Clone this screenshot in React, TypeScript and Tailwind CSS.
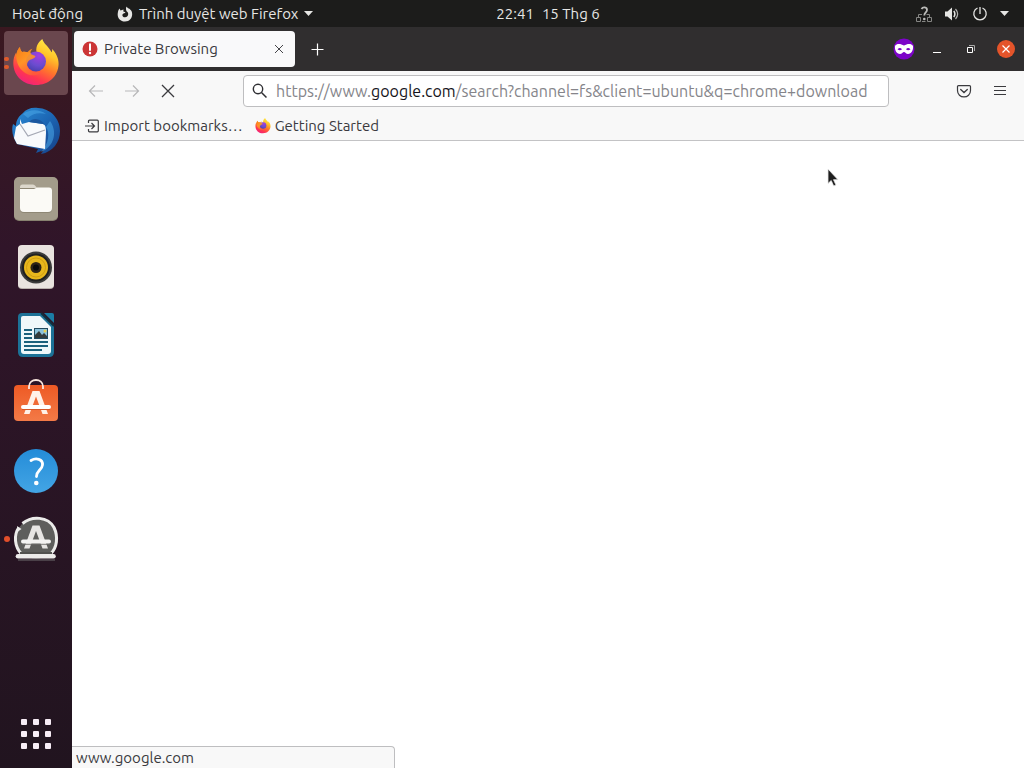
import { useId, useState } from 'react';
import type { ReactNode } from 'react';

function FirefoxIcon({ size }: { size: number }) {
  const id = useId();
  return (
    <svg width={size} height={size} viewBox="0 0 48 48" overflow="visible" aria-hidden="true">
      <defs>
        <linearGradient id={`${id}a`} x1="0.8" y1="0" x2="0.3" y2="1">
          <stop offset="0" stopColor="#fff14a" />
          <stop offset="0.3" stopColor="#ffc42a" />
          <stop offset="0.55" stopColor="#ff7a2a" />
          <stop offset="0.8" stopColor="#ff3650" />
          <stop offset="1" stopColor="#f0217e" />
        </linearGradient>
        <radialGradient id={`${id}b`} cx="0.65" cy="0.2" r="0.85">
          <stop offset="0" stopColor="#a43ee0" />
          <stop offset="0.6" stopColor="#6b4ccf" />
          <stop offset="1" stopColor="#4a3fae" />
        </radialGradient>
        <linearGradient id={`${id}c`} x1="0" y1="0" x2="0.6" y2="1">
          <stop offset="0" stopColor="#f57a16" />
          <stop offset="0.5" stopColor="#ff9a24" />
          <stop offset="1" stopColor="#ff5a3a" />
        </linearGradient>
      </defs>
      <path
        d="M30.300 0C31.500 4.500 36 7 38.500 11.500C39 12.500 39.400 13.500 39.800 13C40.300 12 40.200 11 40 10C43.500 13 46.800 19 46.600 25C46.200 37.500 36.500 46 24 46C11.500 46 1.600 37 1.300 24.500C1.200 20.500 2.400 16.500 4 13.800L4.200 16C5 12.500 6 9.800 8 8C8 10.500 9 12 10.200 13C12 12.500 14 12.700 15.500 13.200L25 15C23 9 25.500 3.500 30.300 0Z"
        fill={`url(#${id}a)`}
      />
      <circle cx="24" cy="22.500" r="10" fill={`url(#${id}b)`} />
      <path
        d="M8 8C8 10.500 9 12 10.200 13C12 12.500 14 12.700 15.500 13.200C17 11.500 18.500 10.300 20.500 9.800C19 11.500 18.200 13 18.400 14.500C20 16 22 16.300 23.500 17.200C23 19.800 19 19.900 17 21.500C15 23.500 14.600 26 15.600 28C18 33.300 24 34.500 29 31.500C28 36 21.500 37.500 16 35.500C8 32 4 24 4.200 16C5 12.500 6 9.800 8 8Z"
        fill={`url(#${id}c)`}
        opacity="0.9"
      />
    </svg>
  );
}

function ThunderbirdIcon() {
  return (
    <svg width="48" height="48" viewBox="0 0 48 48" aria-hidden="true">
      <defs>
        <linearGradient id="bird" x1="0" y1="0" x2="1" y2="1">
          <stop offset="0" stopColor="#2d8fd8" />
          <stop offset="0.5" stopColor="#1c66b4" />
          <stop offset="1" stopColor="#153e86" />
        </linearGradient>
      </defs>
      <path d="M11 6C14 2 20 0 26 1C38 1.500 48 11 48 24C48 35 41 45 29 47L32 43L24 46L26 42L5 37C1 31 -1 24 1 17L4 19C4 13 7 9 11 6Z" fill="url(#bird)" />
      <path d="M11 7C18 2 27 2 34 7C26 5 20 7 16 11ZM34 20C38 25 37 37 29 45C42 40 46 25 38 14Z" fill="#4aa7e8" opacity="0.55" />
      <path d="M8 12L10 17L17 15L31 17C34 18 34 22 34 26L33 42L5 37L2 31L4 20L8 17Z" fill="#f8fafc" />
      <path d="M8 17L16 29L33 23" fill="none" stroke="#a4a8b4" strokeWidth="1.200" />
      <path d="M17 15C21 10 29 11 33 18L31 17Z" fill="#1b579f" />
    </svg>
  );
}

function FilesIcon() {
  return (
    <svg width="48" height="48" viewBox="0 0 48 48" aria-hidden="true">
      <rect x="2" y="3" width="44" height="43" rx="5" fill="#87816f" />
      <rect x="2" y="2" width="44" height="43" rx="5" fill="#a39c8b" />
      <path d="M8 13Q8 10 10 10H22L25 13H38Q40 13 40 16V34Q40 38 36 38H12Q8 38 8 34Z" fill="#807968" opacity="0.6" />
      <path d="M8 12Q8 9.500 10.500 9.500H21Q22.500 9.500 23.500 11L25 13H8Z" fill="#dcd7cc" />
      <path d="M8 14H22L25 12.500H37Q40 12.500 40 15.500V33Q40 37 36 37H12Q8 37 8 33Z" fill="#fbfaf6" />
    </svg>
  );
}

function RhythmboxIcon() {
  return (
    <svg width="48" height="48" viewBox="0 0 48 48" aria-hidden="true">
      <rect x="6" y="3" width="36" height="43" rx="4" fill="#b9b0ac" />
      <rect x="6" y="2" width="36" height="43" rx="4" fill="#e9e3df" />
      <circle cx="24" cy="24.500" r="16" fill="#3b3b3b" />
      <circle cx="24" cy="24.500" r="14" fill="#202020" />
      <circle cx="24" cy="24.500" r="12" fill="#e8b71c" />
      <circle cx="24" cy="24.500" r="9.500" fill="none" stroke="#cf9d12" />
      <circle cx="24" cy="24.500" r="5.500" fill="#2f2417" />
      <circle cx="24" cy="24.500" r="3" fill="#0b0b0b" />
    </svg>
  );
}

function WriterIcon() {
  return (
    <svg width="48" height="48" viewBox="0 0 48 48" aria-hidden="true">
      <path d="M10 2H29L42 15V41Q42 46 37 46H11Q6 46 6 41V6Q6 2 10 2Z" fill="#1c7297" />
      <path d="M32 2H40Q42 2 42 4V12Z" fill="#1b7da5" />
      <path d="M29 2L42 15" stroke="#12303f" strokeWidth="2" />
      <path d="M11 5H28L39 16V40Q39 43 36 43H12Q9 43 9 40V7Q9 5 11 5Z" fill="#eff8fa" />
      <path d="M12 19H20M12 23H20M12 27H20M12 31H36M12 35H36M12 39H30" stroke="#1b617c" strokeWidth="2" />
      <rect x="22" y="17" width="14" height="11" fill="#204a5f" />
      <rect x="23" y="18" width="12" height="9" fill="#8bc3dc" />
      <path d="M23 27V24L27 20L30 24L32 22L35 25V27Z" fill="#333c3c" />
      <circle cx="33" cy="20" r="1.500" fill="#e8cf51" />
    </svg>
  );
}

function SoftwareIcon() {
  return (
    <svg width="48" height="48" viewBox="0 0 48 48" aria-hidden="true">
      <defs>
        <linearGradient id="bag" x1="0" y1="0" x2="0" y2="1">
          <stop offset="0" stopColor="#ee5a24" />
          <stop offset="1" stopColor="#f37a47" />
        </linearGradient>
      </defs>
      <rect x="2" y="6" width="44" height="36" rx="4" fill="url(#bag)" />
      <path d="M17 10V7.500C17 -1.200 31 -1.200 31 7.500V10" fill="none" stroke="#fae7de" strokeWidth="1.800" />
      <path d="M20.500 12H27.500L36 35H30.500L24 17.500L17.500 35H12Z" fill="#fff1e8" />
      <path d="M10 30.500H38" stroke="#d5572a" strokeWidth="1" />
      <path d="M11 28H37" stroke="#fff" strokeWidth="4" strokeLinecap="round" />
    </svg>
  );
}

function HelpIcon() {
  return (
    <svg width="48" height="48" viewBox="0 0 48 48" aria-hidden="true">
      <defs>
        <linearGradient id="help" x1="0" y1="0" x2="0" y2="1">
          <stop offset="0" stopColor="#248cd8" />
          <stop offset="1" stopColor="#43a5e5" />
        </linearGradient>
      </defs>
      <circle cx="24" cy="24" r="22" fill="url(#help)" />
      <path d="M19 13.500C24 10.500 31 12 30.500 18C30 23 24.500 23.500 24.500 29.500" fill="none" stroke="#fff" strokeWidth="2.800" strokeLinecap="round" />
      <circle cx="24.300" cy="36" r="2.300" fill="#fff" />
    </svg>
  );
}

function UpdaterIcon() {
  return (
    <svg width="48" height="48" viewBox="0 0 48 48" aria-hidden="true">
      <circle cx="24" cy="23.500" r="20" fill="#5e5e5c" />
      <path d="M9.500 39C2.500 32 1.500 20 6.800 12.500M10.500 8.500C20 0.500 36 1.500 42 12.500C46.500 22 45 33 38.500 39" fill="none" stroke="#ececea" strokeWidth="3" />
      <path d="M5 11L9.500 14L6 16.500Z" fill="#ececea" />
      <path d="M20.500 10.500H27.500L36 33.500H30.500L24 16L17.500 33.500H12Z" fill="#e7e5e3" />
      <path d="M10 29.200H38" stroke="#6c6b69" strokeWidth="1" />
      <path d="M11 26.500H37" stroke="#f4f3f2" strokeWidth="4" strokeLinecap="round" />
      <path d="M8 38H40" stroke="#52514f" strokeWidth="2" />
      <path d="M6 41.300H41.500" stroke="#edebea" strokeWidth="4.600" strokeLinecap="round" />
      <path d="M6 45H43" stroke="#6f6c6e" strokeWidth="1" />
    </svg>
  );
}

const dockApps: { label: string; icon: ReactNode; windows: number }[] = [
  { label: 'Firefox', icon: <FirefoxIcon size={48} />, windows: 2 },
  { label: 'Thunderbird', icon: <ThunderbirdIcon />, windows: 0 },
  { label: 'Files', icon: <FilesIcon />, windows: 0 },
  { label: 'Rhythmbox', icon: <RhythmboxIcon />, windows: 0 },
  { label: 'LibreOffice Writer', icon: <WriterIcon />, windows: 0 },
  { label: 'Ubuntu Software', icon: <SoftwareIcon />, windows: 0 },
  { label: 'Help', icon: <HelpIcon />, windows: 0 },
  { label: 'Software Updater', icon: <UpdaterIcon />, windows: 1 },
];

function TopBar() {
  return (
    <header className="grid h-[27px] shrink-0 grid-cols-[72px_1fr_auto_1fr] items-center bg-[#1c1c1b] px-3 text-[15px] leading-5 text-[#e6e6e4]">
      <div className="col-span-2 flex items-center gap-[34px]">
        <button type="button">Hoạt động</button>
        <button type="button" className="flex items-center gap-1.5">
          <svg width="16" height="16" viewBox="0 0 16 16" aria-hidden="true">
            <path d="M9.500 0.500C10 2 13 2.500 14.500 5C16.500 9.500 14 15.500 8 15.500C3 15.500 0 11.500 0.800 7C1 5 1.500 4 2.500 2.500L3.500 4.500L6.500 3.500L6.300 5.500L8.500 6.300C8 7.500 6 7.200 5.500 8.500C5 10 6.200 11.300 8 11.300C11 11.300 12 8 10.500 6C9 5.500 8.500 2.500 9.500 0.500Z" fill="currentColor" />
          </svg>
          Trình duyệt web Firefox
          <svg width="9" height="5" viewBox="0 0 9 5" aria-hidden="true">
            <path d="M0 0H9L4.500 5Z" fill="currentColor" />
          </svg>
        </button>
      </div>
      <button type="button" className="flex gap-2">
        <span>22:41</span>
        <span>15 Thg 6</span>
      </button>
      <button type="button" className="flex items-center justify-end gap-3 pr-[3px]" aria-label="System menu">
        <svg width="16" height="16" viewBox="0 0 16 16" aria-hidden="true">
          <path d="M0.500 11.500H4.500V15.500H0.500ZM11.500 11.500H15.500V15.500H11.500ZM2.500 11.500V8.500H6M10.500 8.500H13.500V11.500M6 15.500H9.500" fill="none" stroke="#858583" />
          <path d="M5.500 3C7 0.500 11 1 11 4C11 6.500 8.300 6.500 8.300 9.500" fill="none" stroke="#bcbcba" strokeWidth="1.800" />
          <circle cx="8.300" cy="13" r="1.300" fill="#bcbcba" />
        </svg>
        <svg width="16" height="16" viewBox="0 0 16 16" aria-hidden="true">
          <path d="M1 5.500H3.500L8 1.500V14.500L3.500 10.500H1Z" fill="currentColor" />
          <path d="M9.800 5Q12 8 9.800 11" fill="none" stroke="currentColor" strokeWidth="1.500" />
          <path d="M11.500 3Q15.800 8 11.500 13" fill="none" stroke="#b3b3b1" strokeWidth="1.200" />
        </svg>
        <svg width="16" height="16" viewBox="0 0 16 16" aria-hidden="true">
          <path d="M5.500 2A6.200 6.200 0 1 0 10.500 2M8 1V8" fill="none" stroke="currentColor" strokeWidth="1.300" />
        </svg>
        <svg width="9" height="5" viewBox="0 0 9 5" aria-hidden="true">
          <path d="M0 0H9L4.500 5Z" fill="currentColor" />
        </svg>
      </button>
    </header>
  );
}

function Dock() {
  return (
    <nav aria-label="Dock" className="flex w-[72px] shrink-0 flex-col items-center gap-1 bg-linear-to-b from-[#3a1820] via-[#301529] via-30% to-[#21141f] pt-1 pb-0.5">
      {dockApps.map((app) => (
        <button
          key={app.label}
          type="button"
          aria-label={app.label}
          className={`relative flex size-16 items-center justify-center rounded ${app.windows === 2 ? 'bg-[#6a474e]' : ''}`}
        >
          {app.icon}
          {app.windows > 0 && (
            <span className="absolute inset-y-0 left-0 flex flex-col items-center justify-center gap-1">
              {app.windows === 2 ? (
                <>
                  <span className="h-1 w-[5px] rounded-xs bg-[#e05a2b]" />
                  <span className="h-1 w-[5px] rounded-xs bg-[#e05a2b]" />
                </>
              ) : (
                <span className="size-[6px] rounded-full bg-[#e24f2b]" />
              )}
            </span>
          )}
        </button>
      ))}
      <button type="button" aria-label="Show applications" className="mt-auto grid size-16 grid-cols-3 place-content-center justify-items-center gap-[6px] px-[17px]">
        {Array.from({ length: 9 }, (_, i) => (
          <span key={i} className="size-[6px] rounded-[1px] bg-[#f7ecf5]" />
        ))}
      </button>
    </nav>
  );
}

function TabStrip() {
  return (
    <div className="flex h-11 shrink-0 items-center bg-[#302e2f] pl-0.5">
      <div className="flex h-9 w-[221px] items-center rounded bg-[#f9f9fa] px-2 text-[#3a3a3e]">
        <svg width="16" height="16" viewBox="0 0 16 16" aria-hidden="true">
          <circle cx="8" cy="8" r="7.500" fill="#cb3435" />
          <path d="M8 3.200V9" stroke="#fff" strokeWidth="2" strokeLinecap="round" />
          <circle cx="8" cy="12" r="1.200" fill="#fff" />
        </svg>
        <span className="flex-1 pl-1.5 text-[15px] leading-5">Private Browsing</span>
        <button type="button" aria-label="Close tab" className="flex size-4 items-center justify-center">
          <svg width="10" height="10" viewBox="0 0 10 10" aria-hidden="true">
            <path d="M1 1L9 9M9 1L1 9" stroke="#454549" />
          </svg>
        </button>
      </div>
      <button type="button" aria-label="New tab" className="flex h-9 w-11 items-center justify-center">
        <svg width="13" height="13" viewBox="0 0 13 13" aria-hidden="true">
          <path d="M6.500 0.500V12.500M0.500 6.500H12.500" stroke="#fff" strokeWidth="1.200" />
        </svg>
      </button>
      <div className="ml-auto flex items-center pr-[9px]">
        <svg width="22" height="22" viewBox="0 0 22 22" role="img" aria-label="Private browsing">
          <circle cx="11" cy="11" r="10.500" fill="#7c04c8" />
          <path
            fillRule="evenodd"
            d="M2 8C4 5 8 6 11 7.500C14 6 18 5 20 8C20.500 12 18.500 16 15 16C13 16 12.200 14 11 14C9.800 14 9 16 7 16C3.500 16 1.500 12 2 8ZM4.500 11.300Q7 8.500 9 11.300Q7 13 4.500 11.300ZM13 11.300Q15 8.500 17.500 11.300Q15 13 13 11.300Z"
            fill="#fff"
          />
        </svg>
        <button type="button" aria-label="Minimize" className="ml-4 flex size-3 items-end justify-center">
          <svg width="8" height="8" viewBox="0 0 8 8" aria-hidden="true">
            <path d="M0 5.500H8" stroke="#fff" />
          </svg>
        </button>
        <button type="button" aria-label="Restore" className="ml-[22px] flex size-3 items-center justify-center">
          <svg width="8" height="8" viewBox="0 0 8 8" aria-hidden="true">
            <path d="M0.500 2.500H5.500V7.500H0.500Z" fill="none" stroke="#fff" />
            <path d="M2 0.500H7.500V6" fill="none" stroke="#a9a9a9" />
          </svg>
        </button>
        <button type="button" aria-label="Close window" className="ml-5 flex size-[18px] items-center justify-center rounded-full bg-[#e4542a]">
          <svg width="8" height="8" viewBox="0 0 8 8" aria-hidden="true">
            <path d="M0.500 0.500L7.500 7.500M7.500 0.500L0.500 7.500" stroke="#fff" strokeWidth="1.200" />
          </svg>
        </button>
      </div>
    </div>
  );
}

function AddressBar() {
  const [url, setUrl] = useState('https://www.google.com/search?channel=fs&client=ubuntu&q=chrome+download');
  const parts = url.match(/^(https?:\/\/(?:www\.)?)([^/]*)(.*)$/);

  return (
    <div className="mx-[57px] flex h-8 min-w-0 flex-1 items-center rounded border border-[#bebec0] bg-white">
      <svg width="16" height="16" viewBox="0 0 16 16" className="mx-2 shrink-0" aria-hidden="true">
        <circle cx="6" cy="6" r="4.700" fill="none" stroke="#2f2f33" strokeWidth="1.400" />
        <path d="M9.500 9.500L14.500 14.500" stroke="#2f2f33" strokeWidth="1.500" />
      </svg>
      {/* The input's own text is transparent, the layer under it paints the domain darker */}
      <div className="grid min-w-0 flex-1 items-center text-base leading-5">
        <div aria-hidden="true" className="col-start-1 row-start-1 overflow-hidden whitespace-pre text-[#85858a]">
          {parts ? (
            <>
              {parts[1]}
              <span className="text-[#15141a]">{parts[2]}</span>
              {parts[3]}
            </>
          ) : (
            url
          )}
        </div>
        <input
          type="text"
          aria-label="Search or enter address"
          value={url}
          onChange={(e) => setUrl(e.target.value)}
          spellCheck={false}
          className="col-start-1 row-start-1 w-full min-w-0 bg-transparent text-transparent caret-[#15141a] outline-none"
        />
      </div>
    </div>
  );
}

function NavBar() {
  return (
    <div className="flex h-10 items-center px-1.5 text-[#3a3a3e]">
      <button type="button" aria-label="Back" disabled className="flex h-8 w-9 items-center justify-center text-[#b7b7b9]">
        <svg width="16" height="16" viewBox="0 0 16 16" aria-hidden="true">
          <path d="M15 8H1.500M7 2.500L1.500 8L7 13.500" fill="none" stroke="currentColor" strokeWidth="1.200" />
        </svg>
      </button>
      <button type="button" aria-label="Forward" disabled className="flex h-8 w-9 items-center justify-center text-[#b7b7b9]">
        <svg width="16" height="16" viewBox="0 0 16 16" aria-hidden="true">
          <path d="M1 8H14.500M9 2.500L14.500 8L9 13.500" fill="none" stroke="currentColor" strokeWidth="1.200" />
        </svg>
      </button>
      <button type="button" aria-label="Stop" className="flex h-8 w-9 items-center justify-center">
        <svg width="14" height="14" viewBox="0 0 14 14" aria-hidden="true">
          <path d="M1 1L13 13M13 1L1 13" stroke="currentColor" strokeWidth="1.300" />
        </svg>
      </button>
      <AddressBar />
      <button type="button" aria-label="Save to Pocket" className="flex h-8 w-9 items-center justify-center">
        <svg width="16" height="16" viewBox="0 0 16 16" aria-hidden="true">
          <path d="M2.500 2.600H13.500Q14.500 2.600 14.500 3.600V7.500C14.500 11.500 11.500 13.900 8 13.900C4.500 13.900 1.500 11.500 1.500 7.500V3.600Q1.500 2.600 2.500 2.600Z" fill="none" stroke="currentColor" strokeWidth="1.200" />
          <path d="M4.700 6.500L8 9.500L11.300 6.500" fill="none" stroke="currentColor" strokeWidth="1.300" strokeLinecap="round" />
        </svg>
      </button>
      <button type="button" aria-label="Open menu" className="flex h-8 w-9 items-center justify-center">
        <svg width="12" height="10" viewBox="0 0 12 10" aria-hidden="true">
          <path d="M0 0.500H12M0 4.500H12M0 8.500H12" stroke="currentColor" strokeWidth="1.200" />
        </svg>
      </button>
    </div>
  );
}

function BookmarksBar() {
  return (
    <div className="flex h-[30px] items-center gap-3 border-b border-[#c3c3c5] px-3 text-[15px] leading-5 text-[#3a3a3e]">
      <button type="button" className="flex items-center gap-1">
        <svg width="16" height="16" viewBox="0 0 16 16" aria-hidden="true">
          <path d="M4.500 5V3.200Q4.500 2.200 5.500 2.200H13.300Q14.300 2.200 14.300 3.200V12.800Q14.300 13.800 13.300 13.800H5.500Q4.500 13.800 4.500 12.800V11M1 8H10.500M7.500 5L10.500 8L7.500 11" fill="none" stroke="currentColor" strokeWidth="1.200" />
        </svg>
        Import bookmarks…
      </button>
      <button type="button" className="flex items-center gap-1">
        <FirefoxIcon size={16} />
        Getting Started
      </button>
    </div>
  );
}

export default function App() {
  return (
    <div className="flex h-screen flex-col overflow-hidden font-['Ubuntu','Noto_Sans',sans-serif]">
      <TopBar />
      <div className="flex min-h-0 flex-1">
        <Dock />
        <main className="relative flex min-w-0 flex-1 flex-col bg-white">
          <TabStrip />
          <div className="shrink-0 bg-[#f8f8f8]">
            <NavBar />
            <BookmarksBar />
          </div>
          <div className="flex-1" />
          <div className="absolute bottom-0 left-0 h-[22px] w-[323px] rounded-tr border-t border-r border-[#bebec0] bg-[#f8f8f8] px-1 text-[15px] leading-[22px] text-[#3a3a3e]">
            www.google.com
          </div>
          <svg width="12" height="20" viewBox="0 0 12 20" className="absolute top-[141px] left-[755px]" aria-hidden="true">
            <path d="M1 1V15.500L4.200 12.500L6.700 18L9 17L6.500 11.700H11Z" fill="#1e1e1e" stroke="#e8e8e8" strokeWidth="0.800" />
          </svg>
        </main>
      </div>
    </div>
  );
}
